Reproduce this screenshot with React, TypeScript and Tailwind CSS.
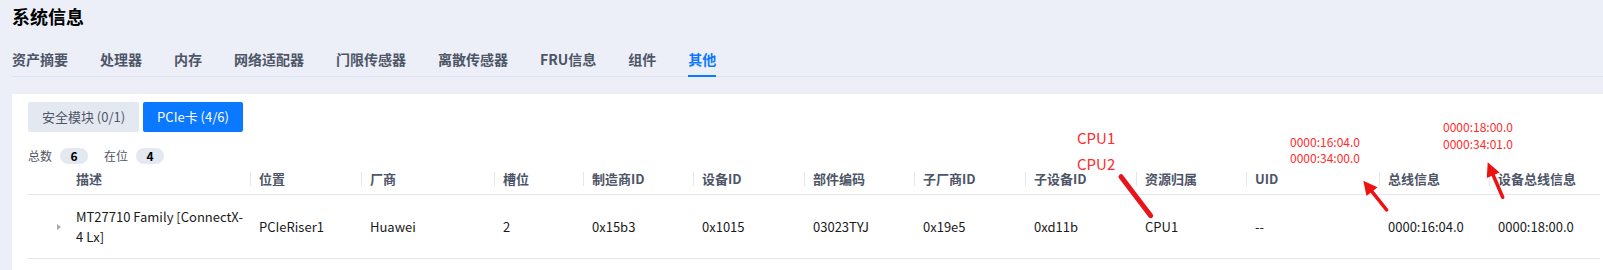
const tabs = [
  "资产摘要",
  "处理器",
  "内存",
  "网络适配器",
  "门限传感器",
  "离散传感器",
  "FRU信息",
  "组件",
  "其他",
];

const columns = [
  { title: "位置", value: "PCIeRiser1" },
  { title: "厂商", value: "Huawei" },
  { title: "槽位", value: "2" },
  { title: "制造商ID", value: "0x15b3" },
  { title: "设备ID", value: "0x1015" },
  { title: "部件编码", value: "03023TYJ" },
  { title: "子厂商ID", value: "0x19e5" },
  { title: "子设备ID", value: "0xd11b" },
  { title: "资源归属", value: "CPU1" },
  { title: "UID", value: "--" },
  { title: "总线信息", value: "0000:16:04.0" },
  { title: "设备总线信息", value: "0000:18:00.0" },
];

const grid =
  "grid grid-cols-[40px_182px_111px_133px_89px_110px_111px_110px_111px_111px_110px_133px_110px_111px]";

const App = () => {
  return (
    <div className="min-h-screen bg-[#eceff7] pl-3 font-['Noto_Sans_CJK_SC','Noto_Sans',sans-serif]">
      {/* Title */}

      <h1 className="pt-1 text-[18px] font-bold leading-6 text-black">
        系统信息
      </h1>

      {/* Tabs */}

      <div className="mt-[21px] flex gap-8 border-b border-[#dde2ec]">
        {tabs.map((tab) => (
          <div
            key={tab}
            className={
              tab === "其他"
                ? "-mb-px border-b-2 border-[#0a78ff] pb-[6px] text-[14px] font-bold leading-5 text-[#0a78ff]"
                : "-mb-px border-b-2 border-transparent pb-[6px] text-[14px] font-bold leading-5 text-[#4d5567]"
            }
          >
            {tab}
          </div>
        ))}
      </div>

      {/* Card */}

      <div className="relative mt-[17px] bg-white pl-4 pr-[3px] pt-2 pb-[13px]">
        <div className="flex gap-1">
          <button className="h-[30px] w-[111px] rounded-[2px] bg-[#e3e8f1] text-[13px] text-[#4f5666]">
            安全模块 (0/1)
          </button>

          <button className="h-[30px] w-[100px] rounded-[2px] bg-[#0a78ff] text-[13px] text-white">
            PCIe卡 (4/6)
          </button>
        </div>

        <div className="mt-4 flex h-4 items-center text-[12px]">
          <span className="text-[#4f5666]">总数</span>
          <span className="ml-2 flex h-4 w-7 items-center justify-center rounded-full bg-[#e3e8f1] font-bold text-black">
            6
          </span>
          <span className="ml-4 text-[#4f5666]">在位</span>
          <span className="ml-2 flex h-4 w-7 items-center justify-center rounded-full bg-[#e3e8f1] font-bold text-black">
            4
          </span>
        </div>

        {/* Table */}

        <div className="text-[13px]">
          <div className={`${grid} h-[31px] border-b border-[#e4e7ed] font-bold text-[#4d5567]`}>
            <div />
            <div className="flex items-center pl-2">描述</div>
            {columns.map((col) => (
              <div key={col.title} className="flex items-center whitespace-nowrap">
                <span className="h-[14px] w-px bg-[#e4e7ed]" />
                <span className="ml-2">{col.title}</span>
              </div>
            ))}
          </div>

          <div className={`${grid} h-[64px] border-b border-[#e4e7ed] text-[#1a1a1a]`}>
            <div className="flex items-center justify-end pr-[7px]">
              <span className="h-0 w-0 border-y-[3px] border-l-[4px] border-y-transparent border-l-[#a3a7b0]" />
            </div>
            <div className="flex items-center pl-2 leading-5">
              <span>
                MT27710 Family [ConnectX-
                <br />4 Lx]
              </span>
            </div>
            {columns.map((col) => (
              <div key={col.title} className="flex items-center whitespace-nowrap pl-[9px]">
                {col.value}
              </div>
            ))}
          </div>
        </div>

        {/* Annotations */}

        <div className="absolute left-[1065px] top-[31px] text-[15px] leading-[26px] text-[#ff2b2b]">
          <div>CPU1</div>
          <div>CPU2</div>
        </div>

        <div className="absolute left-[1278px] top-[40px] text-[12px] leading-4 text-[#ff2b2b]">
          <div>0000:16:04.0</div>
          <div>0000:34:00.0</div>
        </div>

        <div className="absolute left-[1431px] top-[24px] text-[12px] leading-[17px] text-[#ff2b2b]">
          <div>0000:18:00.0</div>
          <div>0000:34:01.0</div>
        </div>

        <svg
          className="pointer-events-none absolute left-0 top-[-2px]"
          width="1591"
          height="177"
          viewBox="0 0 1591 177"
        >
          <line
            x1="1109"
            y1="84.7"
            x2="1138.7"
            y2="123.7"
            stroke="#e8141a"
            strokeWidth="5"
            strokeLinecap="round"
          />
          <line
            x1="1374.7"
            y1="118"
            x2="1360"
            y2="99.6"
            stroke="#ee1111"
            strokeWidth="3.5"
            strokeLinecap="round"
          />
          <polygon points="1351.3,88.7 1365.5,95.2 1354.5,104" fill="#ee1111" />
          <line
            x1="1490.7"
            y1="105.3"
            x2="1481.2"
            y2="83.2"
            stroke="#ee1111"
            strokeWidth="3.5"
            strokeLinecap="round"
          />
          <polygon points="1475.7,70.3 1487.6,80.4 1474.8,86" fill="#ee1111" />
        </svg>
      </div>
    </div>
  );
};

export default App;
